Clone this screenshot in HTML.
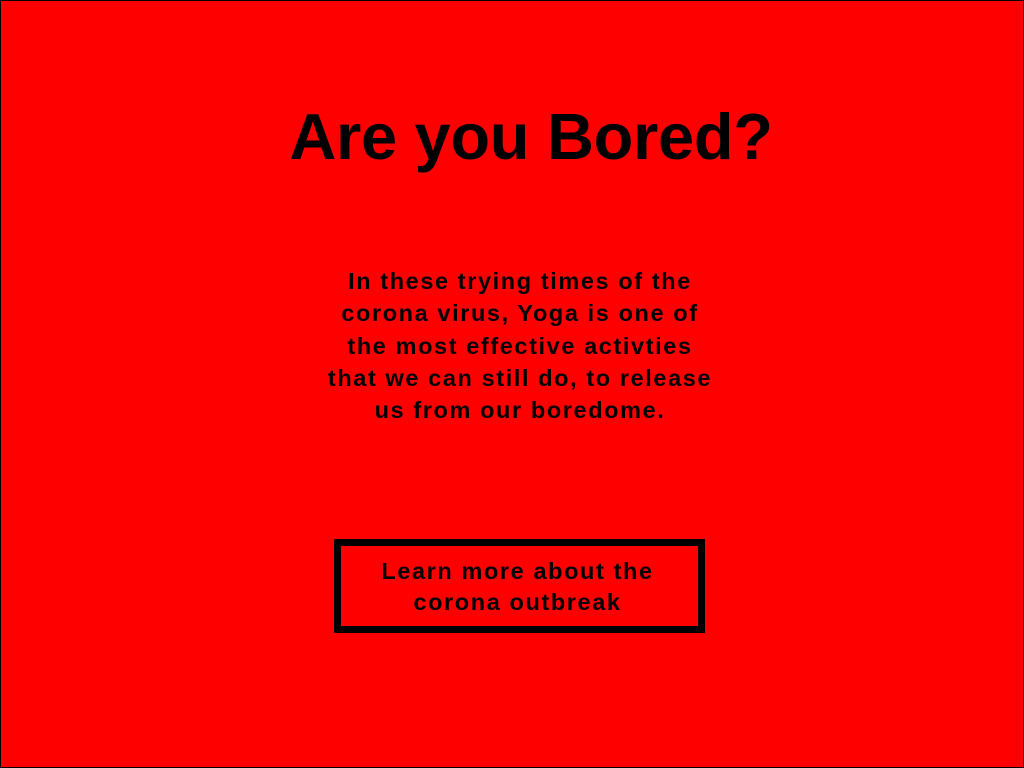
<!DOCTYPE html>
<html><head><style>
html,body{margin:0;padding:0}
body{width:1024px;height:768px;background:#f00;position:relative;overflow:hidden;font-family:"Liberation Sans",sans-serif;color:#000}
.frame{position:absolute;left:0;top:0;width:1022px;height:766px;border:1px solid #000}
h1{position:absolute;left:231px;width:600px;top:92px;margin:0;text-align:center;font-size:65px;font-weight:bold;line-height:90px;letter-spacing:-0.3px}
.p{position:absolute;left:220px;width:600px;top:265px;text-align:center;font-size:23.5px;font-weight:bold;line-height:32.3px;letter-spacing:1.6px}
.btn{position:absolute;left:334px;top:539px;width:357px;height:80px;border:7px solid #000;text-align:center;font-size:23.5px;font-weight:bold;line-height:31px;letter-spacing:1.6px}
.btn div{margin-top:10px;margin-left:-4px;white-space:nowrap}
</style></head><body>
<div class="frame"></div>
<h1>Are you Bored?</h1>
<div class="p">In these trying times of the<br>corona virus, Yoga is one of<br>the most effective activties<br>that we can still do, to release<br>us from our boredome.</div>
<div class="btn"><div>Learn more about the<br>corona outbreak</div></div>
</body></html>
